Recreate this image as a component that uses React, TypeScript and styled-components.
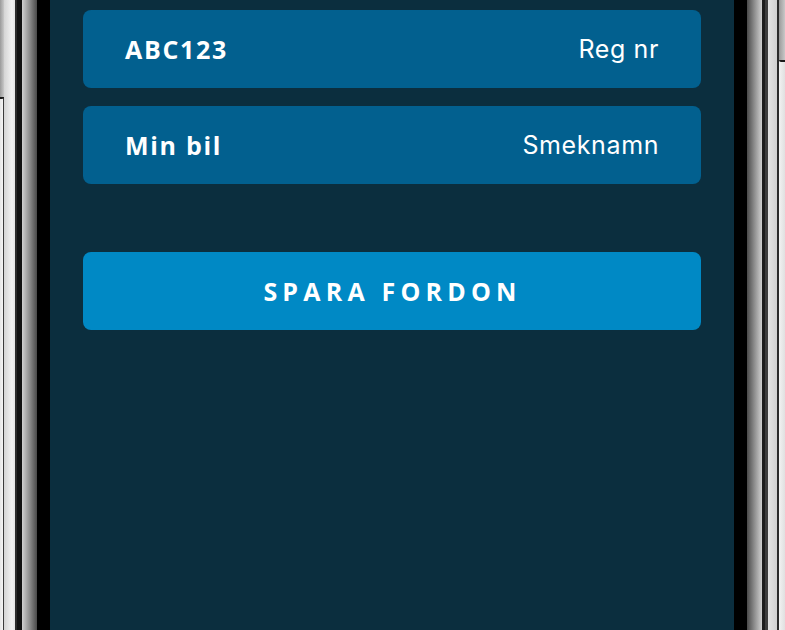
import React from "react";
import styled, { createGlobalStyle } from "styled-components";

const GlobalStyle = createGlobalStyle`
  html, body {
    margin: 0;
    padding: 0;
    background: #ffffff;
  }
  #root {
    width: 785px;
    height: 630px;
    overflow: hidden;
  }
`;

interface IField {
  value: string;
  label: string;
}

const fields: IField[] = [
  { value: "ABC123", label: "Reg nr" },
  { value: "Min bil", label: "Smeknamn" },
];

function App() {
  return (
    <>
      <GlobalStyle />
      <Frame>
        <LeftEdge>
          <SideButton side="left" />
        </LeftEdge>
        <Screen>
          {fields.map((field) => (
            <FieldRow key={field.label}>
              <FieldValue>{field.value}</FieldValue>
              <FieldLabel>{field.label}</FieldLabel>
            </FieldRow>
          ))}
          <SaveButton type="button">SPARA FORDON</SaveButton>
        </Screen>
        <RightEdge>
          <SideButton side="right" />
        </RightEdge>
      </Frame>
    </>
  );
}

const Frame = styled.div`
  width: 785px;
  height: 630px;
  display: flex;
`;

const LeftEdge = styled.div`
  width: 50px;
  height: 100%;
  display: flex;
  flex-direction: column;
  background: linear-gradient(
    to right,
    #e6e6e6 0px,
    #f4f4f4 3px,
    #3a3a3a 3px,
    #3a3a3a 4px,
    #d4d4d4 4px,
    #f2f2f2 12px,
    #e4e4e4 15px,
    #2c2c2c 15px,
    #2c2c2c 17px,
    #121212 17px,
    #121212 22px,
    #d0d0d0 22px,
    #8a8a8a 30px,
    #4a4a4a 37px,
    #000000 37px,
    #000000 50px
  );
`;

const RightEdge = styled.div`
  width: 51px;
  height: 100%;
  display: flex;
  flex-direction: column;
  align-items: flex-end;
  background: linear-gradient(
    to right,
    #000000 0px,
    #000000 13px,
    #4a4a4a 13px,
    #8a8a8a 20px,
    #d0d0d0 28px,
    #1e1e1e 28px,
    #1e1e1e 31px,
    #3e3e3e 31px,
    #3e3e3e 34px,
    #e4e4e4 34px,
    #d0d0d0 43px,
    #2a2a2a 43px,
    #2a2a2a 45px,
    #f2f2f2 45px,
    #e0e0e0 51px
  );
`;

const SideButton = styled.div<{ side: "left" | "right" }>`
  width: ${(props) => (props.side === "left" ? "4px" : "6px")};
  height: ${(props) => (props.side === "left" ? "97px" : "60px")};
  background: linear-gradient(to right, #9a9a9a, #c8c8c8);
  border-bottom: 2px solid #1a1a1a;
  border-radius: ${(props) =>
    props.side === "left" ? "0 0 2px 0" : "0 0 0 2px"};
`;

const Screen = styled.div`
  flex: 1;
  height: 100%;
  background: #0b2e3e;
  box-sizing: border-box;
  padding: 10px 33px 0;
  display: flex;
  flex-direction: column;
  gap: 18px;
`;

const FieldRow = styled.div`
  height: 78px;
  border-radius: 8px;
  background: #02608f;
  box-sizing: border-box;
  padding: 0 42px;
  display: flex;
  align-items: center;
  justify-content: space-between;
  color: #ffffff;
`;

const FieldValue = styled.div`
  font-family: "Open Sans", "DejaVu Sans", sans-serif;
  font-weight: 700;
  font-size: 25px;
  letter-spacing: 1.7px;
`;

const FieldLabel = styled.div`
  font-family: Inter, "Liberation Sans", sans-serif;
  font-weight: 400;
  font-size: 25px;
  letter-spacing: 0.6px;
`;

const SaveButton = styled.button`
  margin-top: 50px;
  height: 78px;
  border: none;
  border-radius: 8px;
  background: #0089c5;
  color: #ffffff;
  font-family: "Open Sans", "DejaVu Sans", sans-serif;
  font-weight: 700;
  font-size: 25px;
  letter-spacing: 5.2px;
  padding: 0 0 0 1px;
`;

export default App;
